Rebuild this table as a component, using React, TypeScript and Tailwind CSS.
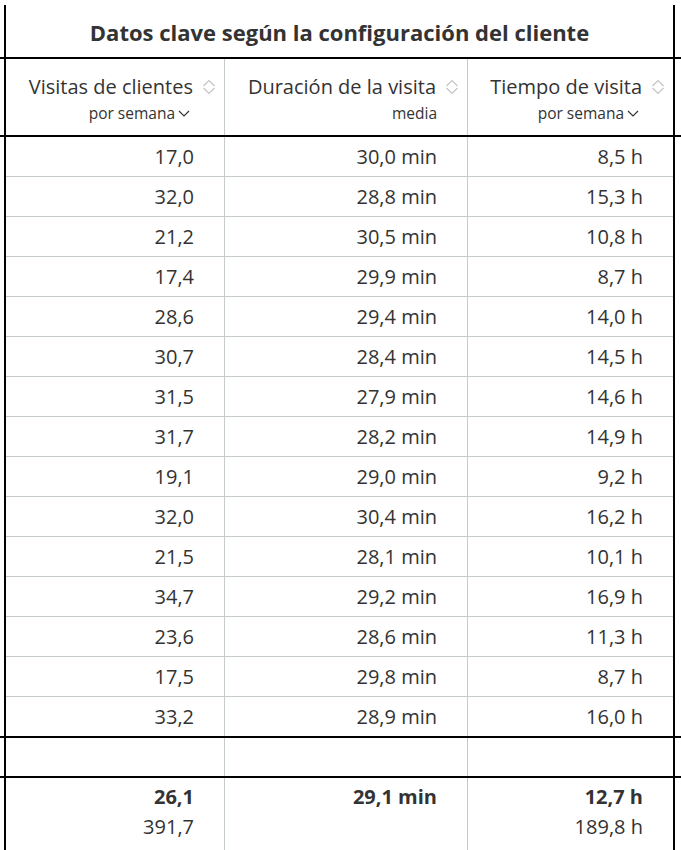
import React from 'react';

const rows: [string, string, string][] = [
  ['17,0', '30,0 min', '8,5 h'],
  ['32,0', '28,8 min', '15,3 h'],
  ['21,2', '30,5 min', '10,8 h'],
  ['17,4', '29,9 min', '8,7 h'],
  ['28,6', '29,4 min', '14,0 h'],
  ['30,7', '28,4 min', '14,5 h'],
  ['31,5', '27,9 min', '14,6 h'],
  ['31,7', '28,2 min', '14,9 h'],
  ['19,1', '29,0 min', '9,2 h'],
  ['32,0', '30,4 min', '16,2 h'],
  ['21,5', '28,1 min', '10,1 h'],
  ['34,7', '29,2 min', '16,9 h'],
  ['23,6', '28,6 min', '11,3 h'],
  ['17,5', '29,8 min', '8,7 h'],
  ['33,2', '28,9 min', '16,0 h'],
];

function SortIcon() {
  return (
    <svg width="14" height="16" viewBox="0 0 14 16" fill="none" stroke="#c4c4c4" strokeWidth="1.2">
      <path d="M1.5 7 L7 1.5 L12.5 7" />
      <path d="M1.5 9 L7 14.5 L12.5 9" />
    </svg>
  );
}

function ChevronDown() {
  return (
    <svg width="12" height="7" viewBox="0 0 12 7" fill="none" stroke="#333" strokeWidth="1.2" className="ml-[3px]">
      <path d="M1 1 L6 6 L11 1" />
    </svg>
  );
}

function HLine() {
  return <div className="-ml-[6px] h-[2px] w-[681px] bg-black" />;
}

function HeaderCell({ title, sub, dropdown, first }: { title: string; sub: string; dropdown?: boolean; first?: boolean }) {
  return (
    <div className={`flex flex-col items-end pr-[8px] pt-[15px] ${first ? '' : 'border-l border-[#c5cacd]'}`}>
      <div className="flex items-center gap-[9px] text-[20px] leading-[26px]">
        <span>{title}</span>
        <SortIcon />
      </div>
      <div
        className={`mt-[3px] flex items-center text-[15.5px] leading-[20px] ${dropdown ? 'pr-[26px]' : 'pr-[22px]'}`}
      >
        <span>{sub}</span>
        {dropdown && <ChevronDown />}
      </div>
    </div>
  );
}

export default function App() {
  return (
    <div className="min-h-[850px] w-[681px] overflow-hidden bg-white pt-[5px] font-['Open_Sans',sans-serif] text-[#333]">
      <div className="ml-[4px] min-h-[845px] w-[671px] border-x-2 border-black">
        <div className="flex h-[52px] items-center justify-center pt-[2px] text-[22px] font-bold">
          Datos clave según la configuración del cliente
        </div>
        <HLine />
        <div className="grid h-[76px] grid-cols-[218px_243px_206px]">
          <HeaderCell title="Visitas de clientes" sub="por semana" dropdown first />
          <HeaderCell title="Duración de la visita" sub="media" />
          <HeaderCell title="Tiempo de visita" sub="por semana" dropdown />
        </div>
        <HLine />
        {rows.map((r, i) => (
          <div
            key={i}
            className={`grid grid-cols-[218px_243px_206px] text-[20px] ${
              i < rows.length - 1 ? 'h-[40px] border-b border-[#c5cacd]' : 'h-[39px]'
            }`}
          >
            {r.map((v, j) => (
              <div
                key={j}
                className={`flex items-center justify-end pr-[30px] ${j > 0 ? 'border-l border-[#c5cacd]' : ''}`}
              >
                {v}
              </div>
            ))}
          </div>
        ))}
        <HLine />
        <div className="grid h-[38px] grid-cols-[218px_243px_206px]">
          <div />
          <div className="border-l border-[#c5cacd]" />
          <div className="border-l border-[#c5cacd]" />
        </div>
        <HLine />
        <div className="grid grid-cols-[218px_243px_206px] text-[20px] leading-[30px]">
          <div className="pb-[16px] pr-[30px] pt-[4px] text-right">
            <div className="font-bold">26,1</div>
            <div>391,7</div>
          </div>
          <div className="border-l border-[#c5cacd] pb-[16px] pr-[30px] pt-[4px] text-right">
            <div className="font-bold">29,1 min</div>
          </div>
          <div className="border-l border-[#c5cacd] pb-[16px] pr-[30px] pt-[4px] text-right">
            <div className="font-bold">12,7 h</div>
            <div>189,8 h</div>
          </div>
        </div>
      </div>
    </div>
  );
}
